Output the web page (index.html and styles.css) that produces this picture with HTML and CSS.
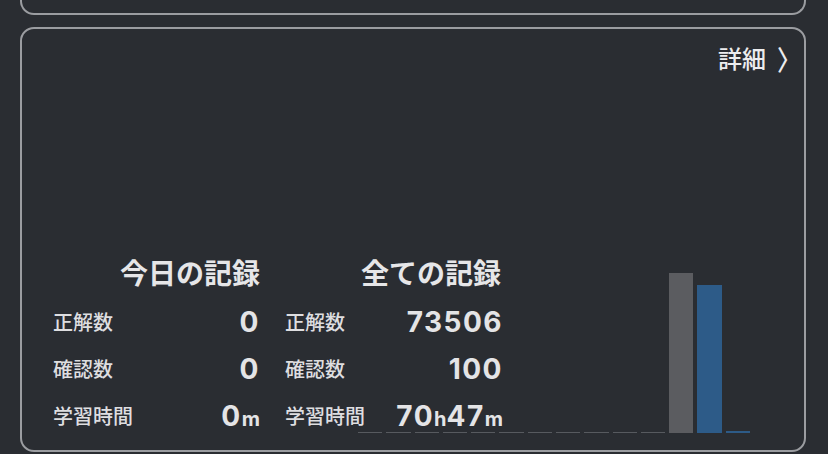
FILE: index.html
```html
<!DOCTYPE html>
<html lang="ja">
<head>
    <meta charset="UTF-8">
    <meta name="viewport" content="width=device-width, initial-scale=1.0">
    <title>学習記録</title>
    <link rel="stylesheet" href="styles.css">
</head>
<body>
<div class="card card-prev"></div>

<div class="card record-card">
    <a class="detail-link" href="#">詳細<span class="chevron">〉</span></a>

    <!-- 直近14日の学習量 -->
    <div class="chart" id="chart"></div>

    <div class="stats">
        <div class="stats-group today">
            <h2 class="stats-title">今日の記録</h2>
            <span class="label">正解数</span>
            <span class="value">0</span>
            <span class="label">確認数</span>
            <span class="value">0</span>
            <span class="label">学習時間</span>
            <span class="value">0<small>m</small></span>
        </div>
        <div class="stats-group total">
            <h2 class="stats-title">全ての記録</h2>
            <span class="label">正解数</span>
            <span class="value">73506</span>
            <span class="label">確認数</span>
            <span class="value">100</span>
            <span class="label">学習時間</span>
            <span class="value">70<small>h</small>47<small>m</small></span>
        </div>
    </div>
</div>

<script>
    // 日ごとの件数 (gray = 正解, blue = 確認)
    const days = [
        { n: 0 }, { n: 0 }, { n: 0 }, { n: 0 }, { n: 0 }, { n: 0 }, { n: 0 },
        { n: 0 }, { n: 0 }, { n: 0 }, { n: 0 },
        { n: 160, kind: 'gray' }, { n: 148, kind: 'blue' }, { n: 2, kind: 'blue' }
    ];
    const chart = document.getElementById('chart');
    days.forEach(day => {
        const bar = document.createElement('div');
        bar.className = 'bar ' + (day.kind || 'empty');
        if (day.n > 0) {
            bar.style.height = day.n + 'px';
        }
        chart.appendChild(bar);
    });
</script>
</body>
</html>
```

FILE: styles.css
```css
body {
    margin: 0;
    background-color: #2a2d32;
    font-family: "Noto Sans CJK JP", sans-serif;
    color: #e4e4e6;
}
.card {
    margin: 0 22px 0 20px;
    border: 2px solid #9b9da1;
    border-radius: 14px;
}
.card-prev {
    height: 13px;
    border-top: none;
    border-radius: 0 0 14px 14px;
}
.record-card {
    position: relative;
    margin-top: 12px;
    height: 421px;
    display: flex;
    flex-direction: column;
}
.detail-link {
    align-self: flex-end;
    margin: 13px 3px 0 0;
    font-size: 24px;
    font-weight: 500;
    line-height: 32px;
    color: #ececee;
    text-decoration: none;
}
.chevron {
    display: inline-block;
    margin-left: 11px;
    transform: scaleY(1.15);
}
.stats {
    margin-top: auto;
    margin-bottom: 11px;
    padding-left: 31px;
    display: flex;
    gap: 25px;
    position: relative;
}
.stats-group {
    display: grid;
    grid-template-rows: 48px 47px 47px 47px;
    align-items: center;
}
.stats-group.today {
    grid-template-columns: 105px 102px;
}
.stats-group.total {
    grid-template-columns: 100px 118px;
}
.stats-title {
    grid-column: 1 / 3;
    margin: 0;
    padding-bottom: 4px;
    font-size: 28px;
    font-weight: 700;
    text-align: right;
    color: #e6e6e8;
}
.total .stats-title {
    margin-right: 2px;
}
.label {
    font-size: 20px;
    font-weight: 500;
    color: #dedee0;
}
.value {
    font-family: Inter, "Noto Sans CJK JP", sans-serif;
    font-size: 28px;
    font-weight: 700;
    text-align: right;
    letter-spacing: 1.5px;
    color: #e4e4e6;
}
.value small {
    font-size: 20px;
    letter-spacing: 0;
}
.chart {
    position: absolute;
    left: 336px;
    bottom: 17px;
    width: 392px;
    height: 170px;
    display: flex;
    align-items: flex-end;
    gap: 4px;
}
.bar {
    flex: 1;
}
.bar.empty {
    height: 1px;
    background-color: #575a5f;
}
.bar.gray {
    background-color: #5b5c60;
}
.bar.blue {
    background-color: #2d5b88;
}
```
